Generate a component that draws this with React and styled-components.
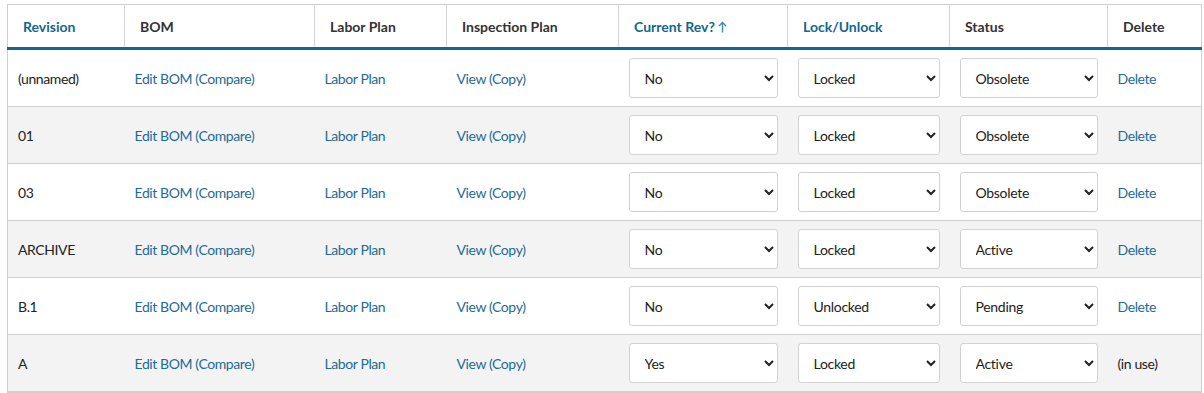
import React from "react"
import styled, { createGlobalStyle } from "styled-components"

const GlobalStyle = createGlobalStyle`
    body {
        margin: 0;
        padding: 4px 3px 0 7px;
        background: #fff;
        font-family: Lato, "Noto Sans", sans-serif;
    }
`

const Table = styled.table`
    width: 1194px;
    border-collapse: collapse;
    table-layout: fixed;
    border: 1px solid #cfcfcf;
    border-bottom: 2px solid #cfcfcf;
    font-size: 14px;
    color: #222;
`

const HeadCell = styled.th`
    height: 42px;
    padding: 0 0 0 15px;
    text-align: left;
    font-weight: 700;
    font-size: 14px;
    color: ${props => props.sortable ? "#12678c" : "#333"};
    border-left: 1px solid #d4d4d4;
    border-bottom: 3px solid #12678c;
    white-space: nowrap;
    &:first-child {
        border-left: none;
    }
    svg {
        vertical-align: -1px;
        margin-left: 3px;
    }
`

const Row = styled.tr`
    background: ${props => props.striped ? "#f3f3f3" : "#fff"};
    border-top: 1px solid #cfcfcf;
`

const Cell = styled.td`
    height: 56px;
    padding: 0 10px;
    white-space: nowrap;
    letter-spacing: -0.4px;
`

const Link = styled.a`
    color: #1d6b97;
    text-decoration: none;
    cursor: pointer;
`

const Select = styled.select`
    width: 100%;
    height: 40px;
    padding: 0 8px 0 11px;
    border: 1px solid #d2d2d2;
    border-radius: 3px;
    background: #fff;
    font-family: Lato, "Noto Sans", sans-serif;
    font-size: 14px;
    letter-spacing: -0.3px;
    color: #222;
    outline: none;
`

const UpArrow = () => (
    <svg width="9" height="12" viewBox="0 0 9 12" fill="none" stroke="#3d8ab0" strokeWidth="1.4">
        <path d="M4.5 11.5V1.5" />
        <path d="M1 5L4.5 1.5L8 5" />
    </svg>
)

const columns = [
    { title: "Revision", width: 117, sortable: true },
    { title: "BOM", width: 190 },
    { title: "Labor Plan", width: 132 },
    { title: "Inspection Plan", width: 172 },
    { title: "Current Rev?", width: 169, sortable: true, arrow: true },
    { title: "Lock/Unlock", width: 162, sortable: true },
    { title: "Status", width: 158 },
    { title: "Delete", width: 94 },
]

const rows = [
    { rev: "(unnamed)", current: "No", lock: "Locked", status: "Obsolete" },
    { rev: "01", current: "No", lock: "Locked", status: "Obsolete" },
    { rev: "03", current: "No", lock: "Locked", status: "Obsolete" },
    { rev: "ARCHIVE", current: "No", lock: "Locked", status: "Active" },
    { rev: "B.1", current: "No", lock: "Unlocked", status: "Pending" },
    { rev: "A", current: "Yes", lock: "Locked", status: "Active", inUse: true },
]

function App() {
    return (
        <>
            <GlobalStyle />
            <Table>
                <colgroup>
                    {columns.map(c => <col key={c.title} style={{ width: c.width }} />)}
                </colgroup>
                <thead>
                    <tr>
                        {columns.map(c => (
                            <HeadCell key={c.title} sortable={c.sortable ? 1 : 0}>
                                {c.title}
                                {c.arrow && <UpArrow />}
                            </HeadCell>
                        ))}
                    </tr>
                </thead>
                <tbody>
                    {rows.map((r, i) => (
                        <Row key={r.rev} striped={i % 2 === 1}>
                            <Cell>{r.rev}</Cell>
                            <Cell><Link>Edit BOM</Link> <Link>(Compare)</Link></Cell>
                            <Cell><Link>Labor Plan</Link></Cell>
                            <Cell><Link>View</Link> <Link>(Copy)</Link></Cell>
                            <Cell>
                                <Select defaultValue={r.current}>
                                    <option>No</option>
                                    <option>Yes</option>
                                </Select>
                            </Cell>
                            <Cell>
                                <Select defaultValue={r.lock}>
                                    <option>Locked</option>
                                    <option>Unlocked</option>
                                </Select>
                            </Cell>
                            <Cell>
                                <Select defaultValue={r.status}>
                                    <option>Active</option>
                                    <option>Pending</option>
                                    <option>Obsolete</option>
                                </Select>
                            </Cell>
                            <Cell>{r.inUse ? "(in use)" : <Link>Delete</Link>}</Cell>
                        </Row>
                    ))}
                </tbody>
            </Table>
        </>
    )
}

export default App
